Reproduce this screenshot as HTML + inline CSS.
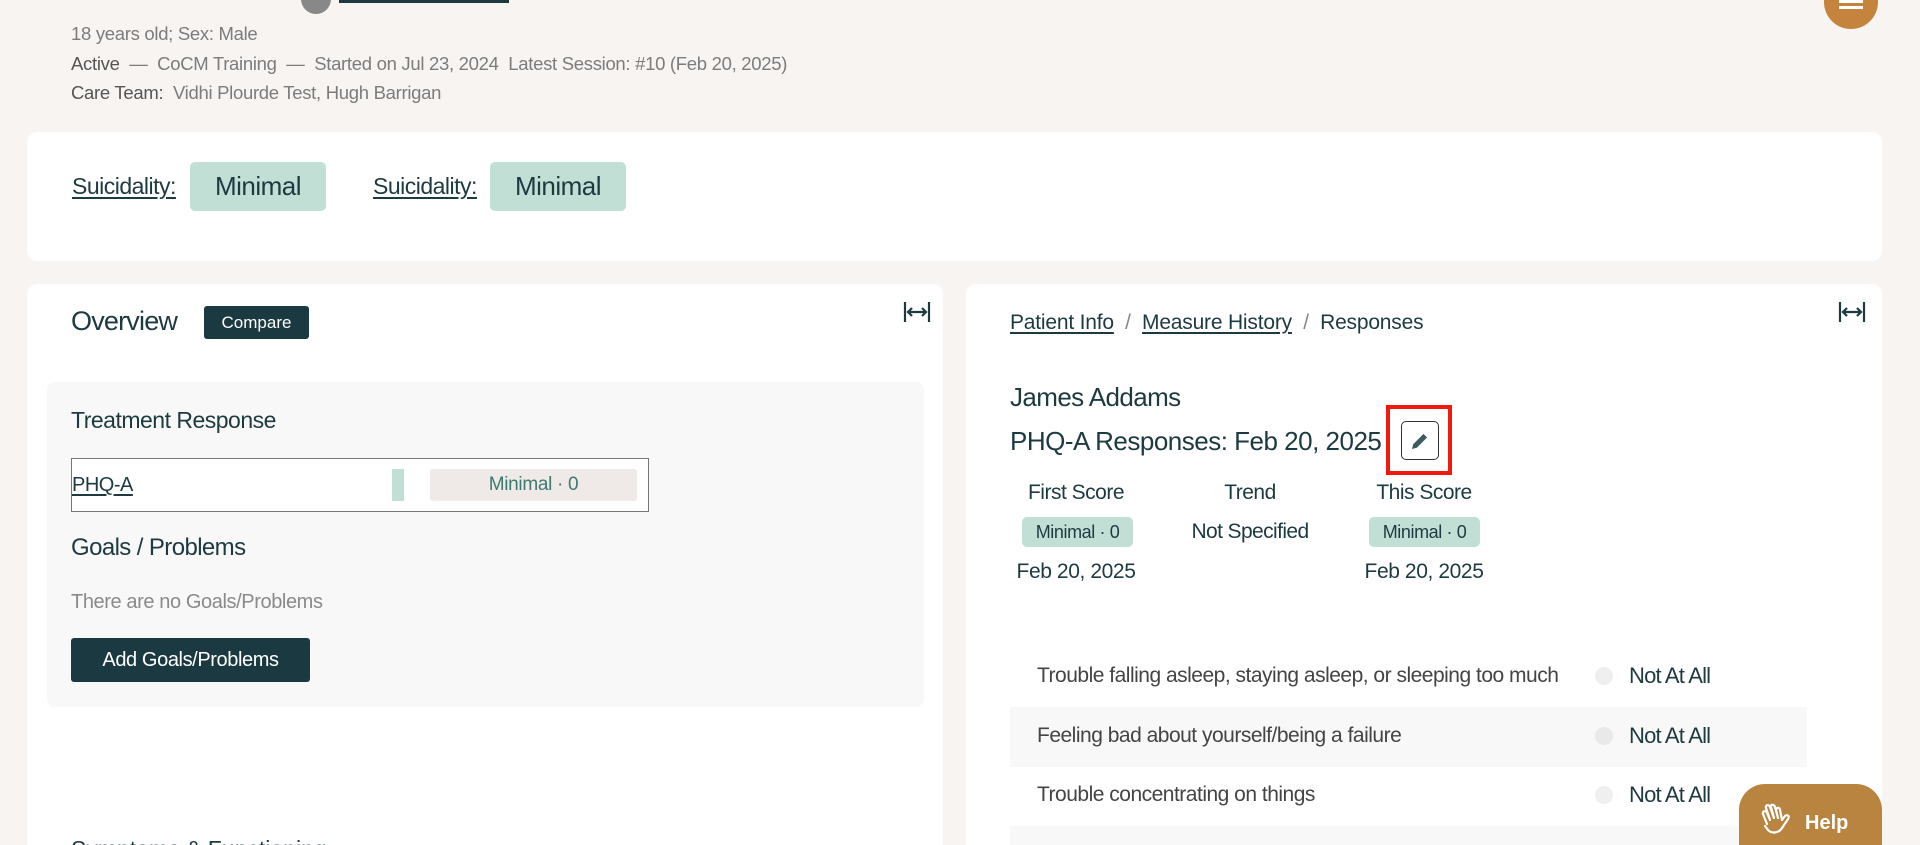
<!DOCTYPE html>
<html style="overflow:hidden;height:845px"><head><meta charset="utf-8"><style>
*{box-sizing:border-box;margin:0;padding:0}
body{width:1920px;height:845px;overflow:hidden;background:#f7f4f1;font-family:"Liberation Sans",sans-serif;color:#1d3a40;position:relative}
.a{position:absolute;white-space:nowrap}
.card{position:absolute;background:#fff;border-radius:10px}
.g{color:#7c7c7c;font-size:18.5px;letter-spacing:-0.3px}
.u{text-decoration:underline;text-underline-offset:3px}
.badge{position:absolute;background:#c2dfd6;border-radius:5px;text-align:center}
</style></head><body>
<div class="a" style="left:301px;top:-16px;width:30px;height:30px;border-radius:50%;background:#888"></div>
<div class="a" style="left:339px;top:0;width:170px;height:3px;background:#1d3a40"></div>
<div class="a" style="left:1824px;top:-25px;width:54px;height:54px;border-radius:50%;background:#c4843e"></div>
<div class="a" style="left:1839px;top:0;width:24px;height:3px;background:#fff"></div>
<div class="a" style="left:1839px;top:6px;width:24px;height:3px;background:#fff"></div>

<div class="a g" style="left:71px;top:23px">18 years old; Sex: Male</div>
<div class="a g" style="left:71px;top:53px"><span style="color:#555">Active</span> &nbsp;— &nbsp;CoCM Training &nbsp;— &nbsp;Started on Jul 23, 2024 &nbsp;Latest Session: #10 (Feb 20, 2025)</div>
<div class="a g" style="left:71px;top:82px"><span style="color:#555">Care Team:</span> &nbsp;Vidhi Plourde Test, Hugh Barrigan</div>

<div class="card" style="left:27px;top:132px;width:1855px;height:129px"></div>
<div class="a u" style="left:72px;top:173px;font-size:23px;letter-spacing:-0.5px">Suicidality:</div>
<div class="badge" style="left:190px;top:162px;width:136px;height:49px;line-height:49px;font-size:26px;letter-spacing:-0.5px">Minimal</div>
<div class="a u" style="left:373px;top:173px;font-size:23px;letter-spacing:-0.5px">Suicidality:</div>
<div class="badge" style="left:490px;top:162px;width:136px;height:49px;line-height:49px;font-size:26px;letter-spacing:-0.5px">Minimal</div>

<div class="card" style="left:27px;top:284px;width:916px;height:561px;border-radius:10px 10px 0 0"></div>
<div class="card" style="left:966px;top:284px;width:916px;height:561px;border-radius:10px 10px 0 0"></div>

<div class="a" style="left:71px;top:306px;font-size:27px;letter-spacing:-0.8px">Overview</div>
<div class="a" style="left:204px;top:306px;width:105px;height:33px;background:#1b3940;border-radius:3px;color:#fff;font-size:17px;text-align:center;line-height:33px">Compare</div>
<svg class="a" style="left:902px;top:300px" width="30" height="24" viewBox="0 0 30 24"><path d="M3 2v20M27 2v20M7 12h16M10 8l-4 4 4 4M20 8l4 4-4 4" stroke="#1d3a40" stroke-width="2.2" fill="none"/></svg>
<svg class="a" style="left:1837px;top:300px" width="30" height="24" viewBox="0 0 30 24"><path d="M3 2v20M27 2v20M7 12h16M10 8l-4 4 4 4M20 8l4 4-4 4" stroke="#1d3a40" stroke-width="2.2" fill="none"/></svg>

<div class="a" style="left:47px;top:382px;width:877px;height:325px;background:#f8f8f8;border-radius:8px"></div>
<div class="a" style="left:71px;top:407px;font-size:23px;letter-spacing:-0.5px">Treatment Response</div>
<div class="a" style="left:71px;top:458px;width:578px;height:54px;border:1.5px solid #777;background:#fff"></div>
<div class="a u" style="left:72px;top:474px;font-size:20px;letter-spacing:-0.5px">PHQ-A</div>
<div class="a" style="left:392px;top:469px;width:12px;height:32px;background:#c2dfd6"></div>
<div class="a" style="left:430px;top:469px;width:207px;height:32px;background:#efe9e7;border-radius:3px;color:#3d7a6f;font-size:19px;text-align:center;line-height:32px;letter-spacing:-0.3px">Minimal · 0</div>
<div class="a" style="left:71px;top:534px;font-size:24px;letter-spacing:-0.6px">Goals / Problems</div>
<div class="a" style="left:71px;top:591px;font-size:20px;color:#8a8a8a;letter-spacing:-0.4px">There are no Goals/Problems</div>
<div class="a" style="left:71px;top:638px;width:239px;height:44px;background:#1b3940;border-radius:3px;color:#fff;font-size:20px;text-align:center;line-height:44px;letter-spacing:-0.4px">Add Goals/Problems</div>
<div class="a" style="left:71px;top:836px;font-size:23px">Symptoms &amp; Functioning</div>

<div class="a" style="left:1010px;top:311px;font-size:21px;letter-spacing:-0.2px"><span class="u">Patient Info</span> <span style="color:#888">&nbsp;/&nbsp;</span> <span class="u">Measure History</span> <span style="color:#888">&nbsp;/&nbsp;</span> Responses</div>
<div class="a" style="left:1010px;top:382px;font-size:26px;letter-spacing:-0.6px">James Addams</div>
<div class="a" style="left:1010px;top:426px;font-size:26px;letter-spacing:-0.5px">PHQ-A Responses: Feb 20, 2025</div>
<div class="a" style="left:1386px;top:405px;width:66px;height:70px;border:4px solid #f0190e"></div>
<div class="a" style="left:1401px;top:421px;width:38px;height:39px;border:1.5px solid #333;border-radius:5px;background:#fff"></div>
<svg class="a" style="left:1408px;top:429px" width="24" height="24" viewBox="0 0 24 24"><path d="M4 20l1.2-4.8L15.5 4.9l3.6 3.6L8.8 18.8z" fill="#3e5c60"/></svg>

<div class="a" style="left:1016px;top:481px;width:120px;text-align:center;font-size:21px;letter-spacing:-0.5px">First Score</div>
<div class="badge" style="left:1022px;top:517px;width:111px;height:30px;line-height:30px;font-size:18px;letter-spacing:-0.4px">Minimal · 0</div>
<div class="a" style="left:1006px;top:560px;width:140px;text-align:center;font-size:21px;letter-spacing:-0.4px">Feb 20, 2025</div>
<div class="a" style="left:1180px;top:481px;width:140px;text-align:center;font-size:21px;letter-spacing:-0.5px">Trend</div>
<div class="a" style="left:1170px;top:520px;width:160px;text-align:center;font-size:21px;letter-spacing:-0.6px">Not Specified</div>
<div class="a" style="left:1364px;top:481px;width:120px;text-align:center;font-size:21px;letter-spacing:-0.5px">This Score</div>
<div class="badge" style="left:1369px;top:517px;width:111px;height:30px;line-height:30px;font-size:18px;letter-spacing:-0.4px">Minimal · 0</div>
<div class="a" style="left:1354px;top:560px;width:140px;text-align:center;font-size:21px;letter-spacing:-0.4px">Feb 20, 2025</div>

<div class="a" style="left:1010px;top:707px;width:797px;height:60px;background:#f8f8f8"></div>
<div class="a" style="left:1010px;top:826px;width:797px;height:30px;background:#f8f8f8"></div>
<div class="a" style="left:1037px;top:664px;font-size:21px;color:#444;letter-spacing:-0.5px">Trouble falling asleep, staying asleep, or sleeping too much</div>
<div class="a" style="left:1037px;top:724px;font-size:21px;color:#444;letter-spacing:-0.5px">Feeling bad about yourself/being a failure</div>
<div class="a" style="left:1037px;top:783px;font-size:21px;color:#444;letter-spacing:-0.5px">Trouble concentrating on things</div>
<div class="a" style="left:1595px;top:667px;width:18px;height:18px;border-radius:50%;background:#efefef"></div>
<div class="a" style="left:1595px;top:727px;width:18px;height:18px;border-radius:50%;background:#e9e9e9"></div>
<div class="a" style="left:1595px;top:786px;width:18px;height:18px;border-radius:50%;background:#efefef"></div>
<div class="a" style="left:1629px;top:663px;font-size:22px;letter-spacing:-0.8px">Not At All</div>
<div class="a" style="left:1629px;top:723px;font-size:22px;letter-spacing:-0.8px">Not At All</div>
<div class="a" style="left:1629px;top:782px;font-size:22px;letter-spacing:-0.8px">Not At All</div>

<div class="a" style="left:1739px;top:784px;width:143px;height:90px;background:#b8843f;border-radius:26px"></div>
<svg class="a" style="left:1757px;top:802px" width="40" height="42" viewBox="0 0 40 42"><path d="M10 22l-4-10c-1-3 3-4 4-1l3 7M13 18L9 6c-1-3 3-4 4-1l4 11M17 16l-3-11c-1-3 3-3 4 0l3 11M21 16l-2-8c0-3 4-3 4 0l2 10 3-4c2-2 5 0 3 3l-6 9c-3 5-10 6-14 2l-3-4" stroke="#fff" stroke-width="2.2" fill="none" stroke-linecap="round" stroke-linejoin="round"/></svg>
<div class="a" style="left:1805px;top:812px;color:#fff;font-size:20px;font-weight:bold">Help</div>
</body></html>
